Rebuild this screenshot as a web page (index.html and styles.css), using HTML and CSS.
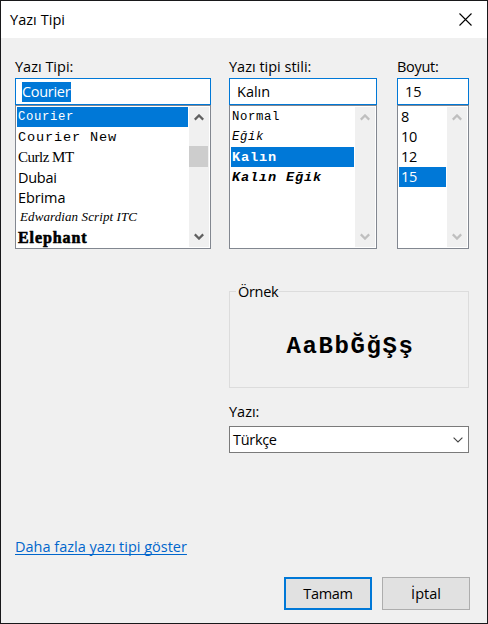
FILE: index.html
```html
<!DOCTYPE html>
<html lang="tr">
<head>
<meta charset="utf-8">
<title>Yazı Tipi</title>
<link rel="stylesheet" href="styles.css">
</head>
<body>
<main class="dialog">
  <header class="titlebar">
    <span class="title">Yazı Tipi</span>
    <svg class="close" width="13" height="13" viewBox="0 0 13 13"><path d="M.5 .5l12 12M12.5 .5l-12 12"/></svg>
  </header>
  <section class="pickers">
    <div class="picker">
      <label class="label">Yazı Tipi:</label>
      <div class="field"><span class="marked">Courier</span></div>
      <div class="listbox">
        <ul class="options">
          <li class="selected mono-small">Courier</li>
          <li class="mono">Courier New</li>
          <li class="curly">Curlz MT</li>
          <li class="dubai">Dubai</li>
          <li class="ebrima">Ebrima</li>
          <li class="script">Edwardian Script ITC</li>
          <li class="elephant">Elephant</li>
        </ul>
        <div class="scroll">
          <svg class="arrow" width="10" height="7" viewBox="0 0 10 7"><path d="M.8 5.6L5 1.4l4.2 4.2"/></svg>
          <i class="thumb"></i>
          <svg class="arrow" width="10" height="7" viewBox="0 0 10 7"><path d="M.8 1.4L5 5.6l4.2-4.2"/></svg>
        </div>
      </div>
    </div>
    <div class="picker">
      <label class="label">Yazı tipi stili:</label>
      <div class="field"><span class="value">Kalın</span></div>
      <div class="listbox">
        <ul class="options">
          <li class="mono-small">Normal</li>
          <li class="mono-small slanted">Eğik</li>
          <li class="selected mono heavy">Kalın</li>
          <li class="mono heavy slanted">Kalın Eğik</li>
        </ul>
        <div class="scroll disabled">
          <svg class="arrow" width="10" height="7" viewBox="0 0 10 7"><path d="M.8 5.6L5 1.4l4.2 4.2"/></svg>
          <svg class="arrow" width="10" height="7" viewBox="0 0 10 7"><path d="M.8 1.4L5 5.6l4.2-4.2"/></svg>
        </div>
      </div>
    </div>
    <div class="picker">
      <label class="label tight">Boyut:</label>
      <div class="field"><span class="value">15</span></div>
      <div class="listbox">
        <ul class="options numbers">
          <li>8</li>
          <li>10</li>
          <li>12</li>
          <li class="selected">15</li>
        </ul>
        <div class="scroll disabled">
          <svg class="arrow" width="10" height="7" viewBox="0 0 10 7"><path d="M.8 5.6L5 1.4l4.2 4.2"/></svg>
          <svg class="arrow" width="10" height="7" viewBox="0 0 10 7"><path d="M.8 1.4L5 5.6l4.2-4.2"/></svg>
        </div>
      </div>
    </div>
  </section>
  <section class="details">
    <div class="sample">
      <span class="legend">Örnek</span>
      <span class="specimen">AaBbĞğŞş</span>
    </div>
    <label class="label">Yazı:</label>
    <div class="combo">
      <span>Türkçe</span>
      <svg width="10" height="6" viewBox="0 0 10 6"><path d="M.6 .6L5 5 9.400 .6"/></svg>
    </div>
  </section>
  <div class="more"><a class="link">Daha fazla yazı tipi göster</a></div>
  <footer class="actions">
    <button class="button primary">Tamam</button>
    <button class="button cancel">İptal</button>
  </footer>
</main>
</body>
</html>
```
FILE: styles.css
```css
* { box-sizing: border-box; }
body {
  margin: 0;
  font: 14.5px/20px "Open Sans", "Noto Sans", sans-serif;
  letter-spacing: -0.3px;
  color: #000;
}
.dialog {
  width: 488px;
  height: 624px;
  border: 1px solid #18181a;
  background: #f0f0f0;
  overflow: hidden;
  display: flex;
  flex-direction: column;
  white-space: nowrap;
}
.titlebar {
  height: 37px;
  flex: none;
  padding: 0 15px 0 9px;
  background: #fff;
  display: flex;
  align-items: center;
  justify-content: space-between;
}
.title, .label, .link, .cancel { letter-spacing: 0; }
.title { letter-spacing: 0.05px; }
.label.tight { letter-spacing: -0.3px; }
.close path { fill: none; stroke: #000; stroke-width: 1.1; }
.pickers {
  display: grid;
  grid-template-columns: 196px 148px 72px;
  column-gap: 18px;
  padding: 19px 0 0 14px;
}
.picker:last-child { margin-left: 2px; width: 72px; }
.label { display: block; height: 21px; }
.field {
  height: 27px;
  border: 1px solid #0078d7;
  background: #fff;
  padding: 2px 6px;
  display: flex;
  align-items: center;
}
.marked { background: #0078d7; color: #fff; height: 20px; width: 49px; }
.value { letter-spacing: 0; padding-left: 1px; }
.listbox {
  height: 144px;
  border: 1px solid #828790;
  background: #fff;
  padding: 1px;
  display: flex;
  gap: 1px;
}
.options {
  flex: 1;
  margin: 0;
  padding: 0;
  list-style: none;
}
.options li { height: 20px; padding-left: 1px; color: #000; }
.options .selected { background: #0078d7; color: #fff; }
.numbers li { padding-left: 2px; }
.mono-small, .mono {
  font-family: "Liberation Mono", monospace;
  font-size: 12.3px;
  letter-spacing: 0.62px;
  line-height: 21px;
}
.mono { font-size: 13.6px; letter-spacing: 0.84px; }
.heavy { font-weight: bold; }
.slanted { font-style: italic; }
.curly { font-family: "Liberation Serif", serif; font-size: 15px; letter-spacing: -0.5px; }
.dubai, .ebrima { line-height: 21px; }
.ebrima { letter-spacing: -0.1px; }
.script {
  font-family: "Liberation Serif", serif;
  font-style: italic;
  font-size: 13px;
  letter-spacing: 0.1px;
}
.options .script { padding-left: 3px; }
.elephant {
  font-family: "Liberation Serif", serif;
  font-weight: bold;
  font-size: 16px;
  letter-spacing: 0.9px;
  line-height: 21px;
  -webkit-text-stroke: 0.6px #000;
}
.scroll {
  width: 20px;
  background: #f0f0f0;
  padding: 7px 0;
  display: flex;
  flex-direction: column;
  align-items: center;
  justify-content: space-between;
}
.arrow path { fill: none; stroke: #606060; stroke-width: 2.2; }
.disabled .arrow path { stroke: #bfbfbf; }
.thumb {
  width: 19px;
  height: 21px;
  margin: 25px 0 auto;
  align-self: flex-start;
  background: #cdcdcd;
}
.details { width: 240px; margin: 42px 0 0 228px; }
.sample {
  position: relative;
  height: 97px;
  margin-bottom: 14px;
  border: 1px solid #dcdcdc;
  display: flex;
  align-items: center;
  justify-content: center;
}
.legend {
  position: absolute;
  left: 6px;
  top: -10px;
  width: 43px;
  padding-left: 2px;
  background: #f0f0f0;
}
.specimen {
  font: bold 24px/30px "Liberation Mono", monospace;
  letter-spacing: 1.6px;
  padding: 15px 0 0 3px;
}
.combo {
  height: 27px;
  margin-top: 3px;
  padding: 0 5px 0 3px;
  border: 1px solid #7a7a7a;
  background: #fff;
  display: flex;
  align-items: center;
  justify-content: space-between;
}
.combo path { fill: none; stroke: #444; stroke-width: 1.1; }
.more { margin: 84px 0 0 14px; }
.link { color: #0066cc; text-decoration: underline; text-underline-offset: 2px; text-decoration-skip-ink: none; }
.actions {
  margin-top: auto;
  padding: 0 17px 13px 0;
  display: flex;
  justify-content: flex-end;
  gap: 10px;
}
.button {
  width: 88px;
  height: 33px;
  padding: 0;
  border: 1px solid #adadad;
  background: #e1e1e1;
  font: inherit;
  letter-spacing: -0.3px;
  color: #000;
}
.button.cancel { letter-spacing: 0; }
.primary { border: 2px solid #0078d7; }
```
